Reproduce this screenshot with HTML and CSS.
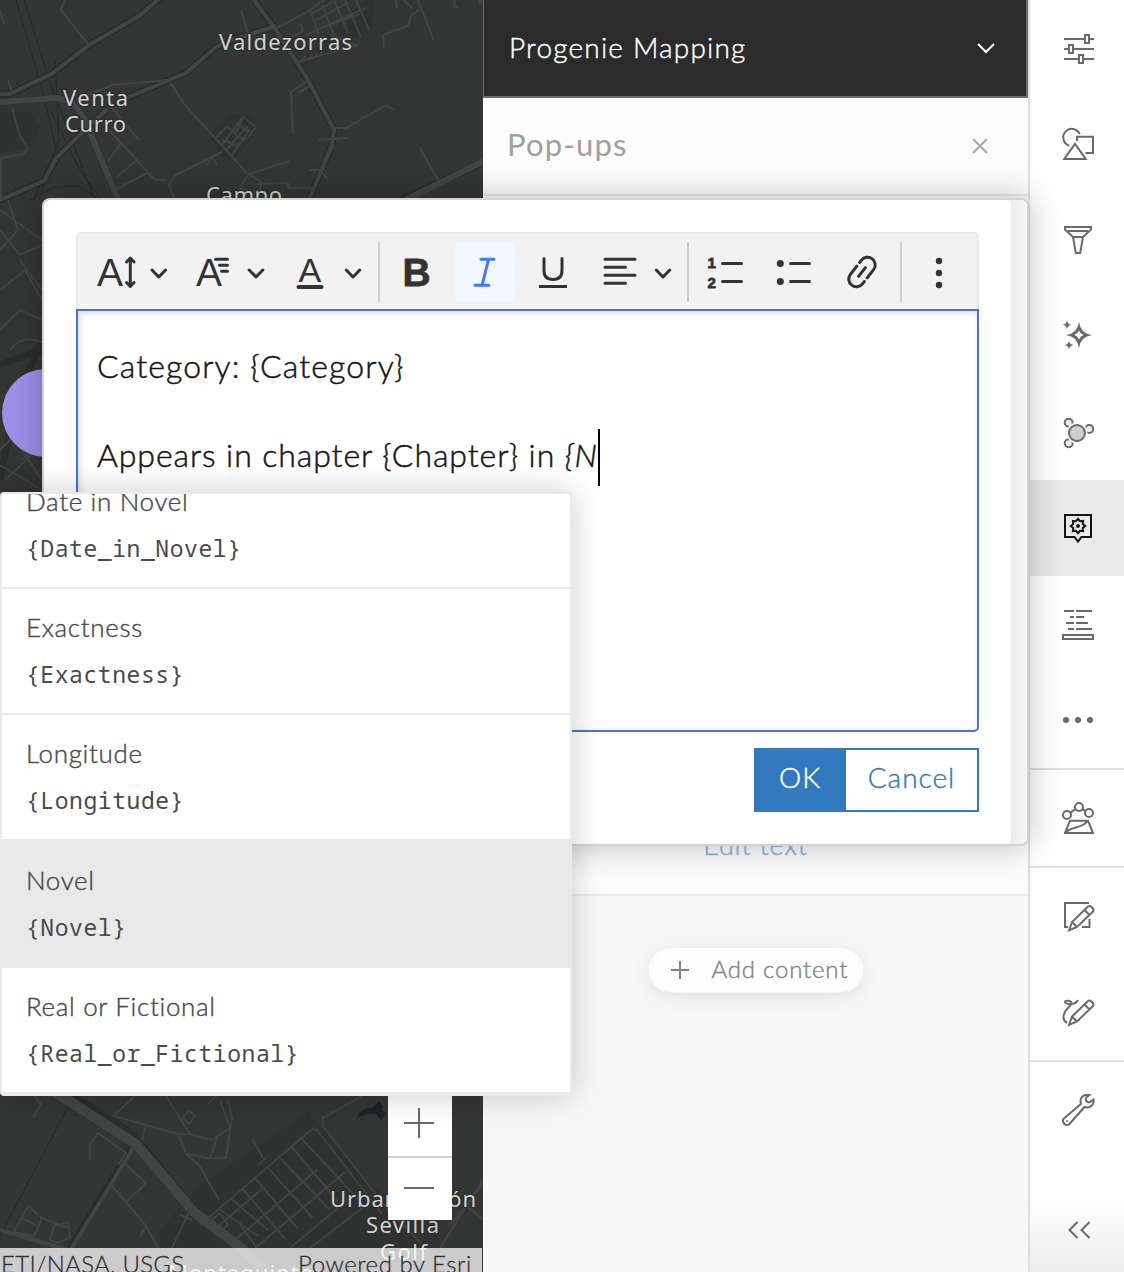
FILE: index.html
```
<!DOCTYPE html>
<html lang="en">
<head>
<meta charset="utf-8">
<title>Progenie Mapping</title>
<link rel="stylesheet" href="styles.css">
</head>
<body>
<div class="app">
  <section class="map">
    <svg class="map-canvas" viewBox="0 0 484 1272">
      <rect width="484" height="1272" fill="#343635"/>
      <g class="blocks">
        <path d="M300 60l65-60h10l-3 25-30 22-37 18zM210 135l20-22 22 2 6 12-20 30-15 5zM0 112l30 0 10 15-8 22-32 4zM160 1230l40-45 108-73 60 70 70 55 15 35H160z"/>
      </g>
      <g class="rails">
        <path d="M16 0l26 90 10 40 4 20-17 50M24 0l28 88 42 110M55 60l4 80-25 60M30 200l25-13 22-1 26 16M50 110l30 60 25 35M68 1107L0 1236"/>
      </g>
      <g class="casing">
        <path d="M0 94h10l43-21 36-28 50-29 22-19M0 102l58-4 14 4 12 16 30 72 8 15M126 98l60-25 30-26 22-9 38-12M254 0l22 30 32 50 26 50-2 15-23 55M0 200l44-19 13-24 50-48M400 200l84-38M72 1095l62 40 60 74 50 40 25 25M135 1142l-65 106"/>
        <path d="M0 480l16-80 26-60M0 365l42-15"/>
      </g>
      <g class="highways">
        <path d="M0 94h10l43-21 36-28 50-29 22-19M126 98l60-25 30-26 22-9 38-12M254 0l22 30 32 50 26 50-2 15-23 55M0 200l44-19 13-24 50-48M135 1145l-65 106M0 1230l60 18"/>
        <path class="wide" d="M0 102l58-4 14 4 12 16 30 72 8 15M405 200l79-39"/>
        <path class="trunk" d="M52 1090l84 54 58 68 50 38 25 25"/>
      </g>
      <g class="streets">
        <path d="M65 0l-4 10 27 34M80 98l32-13 57-5M8 80l4 11M0 10l4 14M277 28l28-15 20-13M241 11l7 22M170 82l14 22 41 45 20 22 17 12-3 10-20-5 10-14 40-13M222 152l-48 24-5 9 6 15M100 120l55 60 12 0M122 142l-14 19M137 160l-21 18M147 173l-30 16M107 102l32 38M256 184l32-1v5h26M309 80l-18 12 2 42M312 85l-13 7M332 128h14l40-23 8 5M348 138l-30 2M325 170l-16 0M334 145l-14 26 8 8M420 148l18 32M384 48l-1-13 25-9 3-10 9-7M418 0l16 41M455 0l-1 6 4 2M12 108l8 28 8 12-5 6-22 4v40M396 0l1 8M404 0l8 8M480 0v5"/>
        <path d="M216 138l10-11 10 5 7-15 13 10-7 9-13 10-14-6M222 145l20-27M226 150l22-24M232 155l18-26M237 124l12 8M231 131l12 8M225 139l12 8M207 165l6-9 4 10"/>
        <path d="M310 15l22-13M313 22l36-20M318 29l42-15M306 35l60-27M298 62l60-17M310 10l9 25M322 5l12 30M334 0l14 33M345 0l16 37M356 0l13 30M329 34l29 12M300 24q8 8-8 12M302 60l4-4M308 60l4-5M314 58l4-5M320 56l3-6"/>
        <path d="M0 230l20 25 22-10M8 200l10 30-18 20M20 260l22 30M0 290l25-20 17 30M0 330l20-20 22 10M10 350q12-16 32-8M0 450l20-20 22 12M5 480l37-35M15 440l27 40M22 460l15-14M0 465l42 25M0 210l42 30"/>
      </g>
      <g class="streets">
        <path d="M35 1096l6 8-8 14M135 1096l-22 20 33 9-4 15M90 1160v-15l8-12 28 20-8 12M124 1163l22 20-20 19-16-18M126 1202l20 24-6 10M146 1226l12 22M166 1096l24 38-12 0-32-9M190 1134l22 6 18-12-10-28M216 1096l-8 8M228 1100l4 18-6 40h-18l-22-4-8-20M218 1135l-8 24M187 1155l12 10 20 35M183 1118l6-8 6 6-6 8zM362 1096l-39 22v7"/>
        <path d="M200 1225l112-96 5 1 65 84M218 1208l40 28M230 1198l38 32M242 1188l44 52M255 1178l42 50M268 1168l45 50M280 1158l50 52M292 1147l46 55M302 1139l56 60M220 1225l30-26 12-10M235 1240l42-36 40-34M255 1248l50-42 40-34M290 1248l60-50M310 1248l60-46M253 1140l10 18M258 1165l9-8M322 1125l65 84 60 60M450 1225l34-42M440 1248l44-70M465 1205l19 15M190 1210l-18 38M180 1215l12 5M206 1225l10 10 12-10-8-12zM240 1225l18 24"/>
        <path d="M14 1232l14-26 14 12-8 18zM28 1206l8 6M42 1218l26 10M22 1218l15 8M50 1240l4-14 14-4 2 15-12 6zM0 1230l40 10 60 20"/>
      </g>
      <path d="M356 1117q8-10 18-10l5-6 4 6-1 4 5 2-6 7-5-6q-8-2-18 4z" fill="#1e2226"/>
      <circle cx="46" cy="413" r="44" fill="#9d8fe8"/>
      <g class="labels">
        <text x="219" y="50" textLength="133">Valdezorras</text>
        <text x="63" y="106" textLength="65">Venta</text>
        <text x="65" y="132" textLength="61">Curro</text>
        <text x="206" y="203" textLength="76">Campo</text>
        <text x="330" y="1207" textLength="146">Urbanización</text>
        <text x="366" y="1233" textLength="73">Sevilla</text>
        <text x="380" y="1260" textLength="47">Golf</text>
        <text x="168" y="1281" textLength="145">Montequinto</text>
      </g>
    </svg>
    <div class="zoom">
      <svg viewBox="0 0 64 62"><path d="M16 29h30M31 14v30"/></svg>
      <svg viewBox="0 0 64 62"><path d="M16 30h30"/></svg>
    </div>
    <div class="attribution"><span class="sources">ETI/NASA, USGS</span><span class="powered">Powered by Esri</span></div>
  </section>

  <main class="panel">
    <header class="layer-picker">
      <span>Progenie Mapping</span>
      <svg viewBox="0 0 20 20" width="20" height="20"><path d="M2 7l8 8 8-8"/></svg>
    </header>
    <div class="panel-title">
      <h1>Pop-ups</h1>
      <svg viewBox="0 0 16 16" width="16" height="16"><path d="M1 1l14 14M15 1L1 15"/></svg>
    </div>
    <div class="panel-content"><a class="edit-text">Edit text</a></div>
    <div class="panel-footer">
      <button class="add-content"><svg viewBox="0 0 18 18" width="18" height="18"><path d="M0 9h18M9 0v18"/></svg><span>Add content</span></button>
    </div>
  </main>

  <nav class="actions">
    <div class="action"><svg viewBox="0 0 36 36"><path d="M5 9h20M31 9h4M5 19h4M15 19h20M5 29h14M25 29h10"/><path d="M26 5h4v8h-4zM10 15h4v8h-4zM20 25h4v8h-4z"/></svg></div>
    <div class="action"><svg viewBox="0 0 36 36"><path d="M20.700 8A8.600 8.600 0 1 0 10 19.600M18 15v-4.200h16V27h-7.500M16 17.800L26.700 33H5.300z"/></svg></div>
    <div class="action"><svg viewBox="0 0 36 36"><path d="M6 5h26v2.500L24 15H14L6 7.500zM9 9h20M14 15l2.800 16h4.400L24 15"/></svg></div>
    <div class="action"><svg viewBox="0 0 36 36"><path class="solid" fill-rule="evenodd" d="M20 4q1.500 11.500 13 13Q21.500 18.500 20 30 18.500 18.500 7 17 18.500 15.500 20 4zM20 12.500q-1.200 3.300-4.500 4.500 3.300 1.200 4.500 4.500 1.200-3.300 4.500-4.500-3.300-1.200-4.500-4.500z"/><path class="solid" d="M8 2q.5 4.500 4.500 4.800Q8.500 7.300 8 11.500 7.500 7.300 3.500 6.800 7.500 6.500 8 2zM10 22.500q.5 4.200 4.500 4.500-4 .5-4.500 4.700-.5-4.200-4.500-4.700 4-.3 4.500-4.500z"/></svg></div>
    <div class="action"><svg viewBox="0 0 36 36"><g fill="#ededed"><circle cx="9.700" cy="8.800" r="4"/><circle cx="30.200" cy="15" r="4"/><circle cx="9.700" cy="29.200" r="4"/></g><circle cx="18" cy="19" r="10.500" class="knockout"/><circle cx="18" cy="19" r="8" fill="#cfcfcf"/></svg></div>
    <div class="action active"><svg viewBox="0 0 36 36"><path d="M6 5h26v22h-9.500L19 31.500 15.500 27H6z"/><path d="M26.200 16L23.800 18l.3 3.100L21 20.800 19 23.200 17 20.800l-3.100.3.300-3.100-2.400-2 2.400-2-.3-3.100 3.100.3L19 8.800l2 2.400 3.100-.3-.3 3.100z"/><circle class="solid" cx="19" cy="16" r="2"/></svg></div>
    <div class="action"><svg viewBox="0 0 36 36"><path d="M5 5h10M17 5h16M11 11h4M17 11h8M7 17h8M17 17h12M9 23h6M17 23h16M4 29h30v4H4z"/></svg></div>
    <div class="action"><svg viewBox="0 0 36 36"><g class="solid"><circle cx="7" cy="18" r="3"/><circle cx="19" cy="18" r="3"/><circle cx="31" cy="18" r="3"/></g></svg></div>
    <hr>
    <div class="action"><svg viewBox="0 0 36 36"><circle cx="8" cy="15" r="4"/><circle cx="20" cy="7" r="4"/><circle cx="30" cy="13" r="4"/><path d="M11.300 12.600l5.300-3.500M23.300 9.200l3.500 1.800M11 20.700h18L34 33H6zM6 33c6-7 17-4 22.500-12"/></svg></div>
    <hr>
    <div class="action"><svg viewBox="0 0 36 36"><path d="M30 5H6v24h3M30.500 21v8H23M10 32.500l3-8.500L28.500 9q2-2 4 0l1 1q2 2 0 4L18 29zM25.500 12l5 5M13 24l5 5"/></svg></div>
    <div class="action"><svg viewBox="0 0 36 36"><path d="M10 31l3-8.500L28.500 7.500q2-2 4 0l1 1q2 2 0 4L18 27.500zM25.500 10.500l5 5M13 22.500l5 5M19 6c-2 3.500-5 4.500-9 4C5 9.500 5 7 8 6.700c4-.4 6 2 3 5-4 4-7 8-6.500 12 .2 2.500 1 4 3.500 5"/></svg></div>
    <hr>
    <div class="action"><svg viewBox="0 0 36 36"><path d="M4.800 26.500L22 12C20 6 24.500 1.500 30.500 3L27 5.800c-1.200 2.700 1.200 5.200 4 4.200l3.500-2.500C35.500 13 31 16.500 25.500 15L10.500 32A4 4 0 0 1 4.800 26.500z"/><circle class="solid" cx="8" cy="29" r="1"/></svg></div>
    <div class="action collapse"><svg viewBox="0 0 36 36"><path d="M18.500 10l-8 8 8 8M30.500 10l-8 8 8 8"/></svg></div>
  </nav>
</div>

<div class="dialog">
  <div class="dialog-body">
    <div class="toolbar">
      <svg viewBox="88 242 94 60" width="94"><text x="97" y="286" font-size="39">A</text><path d="M130.300 259v27M126.500 262l3.800-4 3.800 4M126.500 282.500l3.800 4 3.800-4M152 270l6.800 7 6.800-7"/></svg>
      <svg viewBox="182 242 98 60" width="98"><text x="196" y="286" font-size="39">A</text><path d="M215.500 259.300h12M219.500 265.300h8M221.500 271.300h6M249.200 270l6.800 7 6.800-7"/></svg>
      <svg viewBox="280 242 98 60" width="98"><text x="298.500" y="282" font-size="34">A</text><path d="M298.500 287h23" stroke-width="4"/><path d="M346.200 270l6.800 7 6.800-7"/></svg>
      <i class="sep"></i>
      <div class="group">
        <svg viewBox="387 242 60 60" width="60"><text x="402.500" y="286" font-size="39" class="bold">B</text></svg>
        <svg class="on" viewBox="455 242 60 60" width="60"><path d="M481 259.200h13M475 285.300h14M488.500 259.500l-6.500 26"/></svg>
        <svg viewBox="523 242 60 60" width="60"><path d="M544 258.500v12q0 9 9 9t9-9v-12"/><path stroke-linecap="butt" d="M539 286.500h28"/></svg>
      </div>
      <svg viewBox="583 242 104 60" width="104"><path d="M605 259.300h30M605 267.300h20.500M605 275.300h30M605 283.300h20.500M656.200 270l6.800 7 6.800-7"/></svg>
      <i class="sep"></i>
      <div class="group">
        <svg viewBox="696 242 60 60" width="60"><text x="707.500" y="268" font-size="15" class="bold">1</text><text x="707.500" y="288" font-size="15" class="bold">2</text><path d="M722.500 263.500h19M722.500 281.500h19"/></svg>
        <svg viewBox="764 242 60 60" width="60"><circle cx="780.300" cy="263.500" r="3.500"/><circle cx="780.300" cy="281.500" r="3.500"/><path d="M790.500 263.500h19M790.500 281.500h19"/></svg>
        <svg viewBox="832 242 60 60" width="60"><path transform="rotate(38 862 272)" d="M854.300 266v-3a7.700 7.700 0 0 1 15.400 0V273.500M869.700 278v3a7.700 7.700 0 0 1-15.400 0V270.500M862 266.500v11"/></svg>
      </div>
      <i class="sep last"></i>
      <svg viewBox="909 242 60 60" width="60"><circle cx="939" cy="261" r="3.200"/><circle cx="939" cy="273" r="3.200"/><circle cx="939" cy="285" r="3.200"/></svg>
    </div>
    <div class="editor">
      <p class="line-one">Category: {Category}</p>
      <p class="line-two">Appears in chapter {Chapter} in <em>{N</em></p>
      <i class="caret"></i>
    </div>
    <div class="buttons"><button class="ok">OK</button><button class="cancel">Cancel</button></div>
  </div>
  <div class="scroll-track"></div>
</div>

<ul class="fields">
  <li><span class="name">Date in Novel</span><code>{Date_in_Novel}</code></li>
  <li><span class="name">Exactness</span><code>{Exactness}</code></li>
  <li><span class="name">Longitude</span><code>{Longitude}</code></li>
  <li class="selected"><span class="name">Novel</span><code>{Novel}</code></li>
  <li><span class="name">Real or Fictional</span><code>{Real_or_Fictional}</code></li>
</ul>
</body>
</html>
```
FILE: styles.css
```
* { box-sizing: border-box; }
body {
  margin: 0;
  width: 1124px;
  height: 1272px;
  position: relative;
  overflow: hidden;
  font-family: Lato, "Liberation Sans", sans-serif;
  font-weight: 300;
  -webkit-text-stroke: .4px;
  white-space: nowrap;
}
button { font: inherit; padding: 0; margin: 0; border: 0; -webkit-text-stroke: inherit; }
p, h1, ul { margin: 0; padding: 0; }
svg { display: block; flex: none; fill: none; -webkit-text-stroke: 0; }

.app { display: grid; grid-template-columns: 483px 545px 96px; height: 1272px; }

/* Map */
.map { position: relative; overflow: hidden; background: #343635; }
.map-canvas { width: 484px; height: 1272px; }
.blocks { fill: #303231; }
.rails { stroke: #272929; stroke-width: 1; }
.casing { stroke: #2b2d2c; stroke-width: 7; }
.highways { stroke: #434544; stroke-width: 4; stroke-linejoin: round; }
.highways .wide { stroke-width: 6; }
.highways .trunk { stroke-width: 10; }
.streets { stroke: #414443; stroke-width: 2; stroke-linejoin: round; }
.labels {
  fill: #d0d0cc;
  font: 22px "Noto Sans", sans-serif;
  stroke: #2f3130;
  stroke-width: 3px;
  paint-order: stroke;
}
.zoom {
  position: absolute;
  left: 388px;
  top: 1094px;
  width: 64px;
  background: #fff;
}
.zoom svg { width: 64px; height: 62px; stroke: #6a6a6a; stroke-width: 2; }
.zoom svg + svg { height: 64px; border-top: 2px solid #cfcfcf; }
.attribution {
  position: absolute;
  left: 0;
  bottom: 0;
  width: 482px;
  height: 24px;
  padding: 0 10px 0 1px;
  display: flex;
  justify-content: space-between;
  background: rgba(255, 255, 255, .75);
  color: #323232;
  font-size: 24px;
  letter-spacing: .55px;
  line-height: 31px;
  -webkit-text-stroke: .3px;
  overflow: hidden;
}
.sources { letter-spacing: .3px; }

/* Panel */
.panel { display: flex; flex-direction: column; background: #f7f7f7; }
.layer-picker {
  height: 98px;
  padding: 0 30px 2px 25px;
  display: flex;
  align-items: center;
  justify-content: space-between;
  background: #2b2b2b;
  border: solid #6e6e6e;
  border-width: 0 2px 2px 1px;
  color: #fff;
  font-size: 28px;
  letter-spacing: 1.2px;
}
.layer-picker svg { stroke: #fff; stroke-width: 2; }
.panel-title {
  height: 98px;
  padding: 0 40px 1px 24px;
  display: flex;
  align-items: center;
  justify-content: space-between;
  background: #fcfcfc;
  border-bottom: 2px solid #ebebeb;
}
.panel-title h1 { margin-top: -3px; font-size: 31px; font-weight: 400; letter-spacing: 1.2px; color: #9f9f9f; -webkit-text-stroke: 0; }
.panel-title svg { stroke: #a8a8a8; stroke-width: 2; }
.panel-content {
  height: 700px;
  padding-bottom: 33px;
  display: flex;
  align-items: flex-end;
  justify-content: center;
  background: #fcfcfc;
  border-bottom: 2px solid #ebebeb;
}
.edit-text { font-size: 27px; line-height: 32px; letter-spacing: .8px; color: #8fb2d6; }
.panel-footer { flex: 1; padding-top: 52px; display: flex; justify-content: center; align-items: flex-start; }
.add-content {
  width: 214px;
  height: 44px;
  padding-left: 22px;
  display: flex;
  align-items: center;
  gap: 23px;
  border-radius: 22px;
  background: #fdfdfd;
  box-shadow: 0 0 0 1px #f0f0f0, 0 5px 20px rgba(0, 0, 0, .09);
  font-size: 24px;
  letter-spacing: .8px;
  color: #838383;
}
.add-content span { margin-top: -3px; }
.add-content svg { stroke: #838383; stroke-width: 2; }

/* Action bar */
.actions {
  display: flex;
  flex-direction: column;
  border-left: 2px solid #dfdfdf;
  background: linear-gradient(#fff 0 1195px, #ececec 1272px);
}
.action { height: 96px; display: flex; align-items: center; justify-content: center; }
.action svg { width: 36px; height: 36px; stroke: #6a6a6a; stroke-width: 2; overflow: visible; }
.action .solid { fill: #6a6a6a; stroke: none; }
.action .knockout { fill: #fff; stroke: none; }
.action.active { background: #eaeaea; }
.action.active svg { stroke: #151515; }
.action.active .solid { fill: #151515; }
.actions hr { width: 100%; height: 2px; margin: 0; border: 0; background: #dfdfdf; flex: none; }
.collapse { height: 84px; margin-top: 30px; }

/* Text editing dialog */
.dialog {
  position: absolute;
  left: 42px;
  top: 198px;
  width: 987px;
  height: 648px;
  display: flex;
  border: 2px solid #d3d3d3;
  border-radius: 8px;
  background: #f3f3f3;
  background-clip: padding-box;
  box-shadow: 0 0 34px rgba(0, 0, 0, .26);
}
.dialog-body { width: 967px; padding: 32px; border-radius: 6px; background: #fff; }
.scroll-track { flex: 1; border-radius: 0 6px 6px 0; background: linear-gradient(90deg, #ececec, #f7f7f7); }
.toolbar {
  width: 903px;
  height: 77px;
  padding: 8px 0 0 10px;
  display: flex;
  background: #f2f2f2;
  border: 2px solid #e9e9e9;
  border-bottom: 0;
  border-radius: 5px 5px 0 0;
}
.toolbar svg { height: 60px; stroke: #333; stroke-width: 3; stroke-linecap: round; stroke-linejoin: round; }
.toolbar text { fill: #333; stroke: none; font-family: "Liberation Sans", sans-serif; font-weight: 400; }
.toolbar .bold { font-weight: 700; stroke: #333; stroke-width: .8px; }
.toolbar circle { fill: #333; stroke: none; }
.toolbar svg.on { background: #f0f7ff; border-radius: 4px; stroke: #4477f5; }
.group { display: flex; gap: 8px; }
.sep { width: 2px; height: 60px; margin-right: 7px; background: #cccdd2; }
.sep:has(+ svg) { margin-left: 8px; }
.editor {
  position: relative;
  width: 903px;
  height: 423px;
  padding: 35px 19px;
  border: 2px solid #4374e0;
  border-radius: 0 0 5px 5px;
  box-shadow: inset 2px 2px 7px rgba(0, 0, 0, .13);
  color: #151515;
  font-size: 32px;
  line-height: 40px;
  -webkit-text-stroke: .5px;
}
.line-one { letter-spacing: 1.1px; }
.line-two { margin-top: 49px; letter-spacing: .92px; }
.caret { position: absolute; left: 520px; top: 118px; width: 2px; height: 57px; background: #000; }
.buttons { margin-top: 16px; display: flex; justify-content: flex-end; font-size: 28px; }
.buttons button { height: 64px; padding-bottom: 6px; border: 2px solid #3279bd; letter-spacing: 1px; }
.buttons .ok { width: 92px; background: #3279bd; color: #fff; }
.buttons .cancel { width: 133px; border-left: 0; background: #fff; color: #3279bd; }

/* Field suggestions */
.fields {
  position: absolute;
  left: 0;
  top: 492px;
  width: 572px;
  height: 604px;
  overflow: hidden;
  list-style: none;
  background: #fff;
  border: 2px solid #eaeaea;
  border-bottom-width: 4px;
  border-radius: 4px;
  box-shadow: 0 0 32px rgba(0, 0, 0, .2);
  color: #4a4a4a;
}
.fields li { display: flow-root; height: 126px; padding: 21px 0 0 24px; border-bottom: 2px solid #e8e8e8; }
.fields li:first-child { height: 95px; padding-top: 0; }
.fields li:first-child .name { margin-top: -10px; }
.fields li:last-child { border: 0; }
.fields .selected { height: 128px; margin: -1px -2px 0; padding: 23px 0 0 26px; background: #e9e9e9; border: 0; }
.name { display: block; font-size: 26px; line-height: 34px; letter-spacing: .65px; }
.fields code {
  display: block;
  margin-top: 12px;
  font: 23px/36px "Noto Sans Mono", "DejaVu Sans Mono", monospace;
  letter-spacing: .57px;
  -webkit-text-stroke: 0;
}
```
